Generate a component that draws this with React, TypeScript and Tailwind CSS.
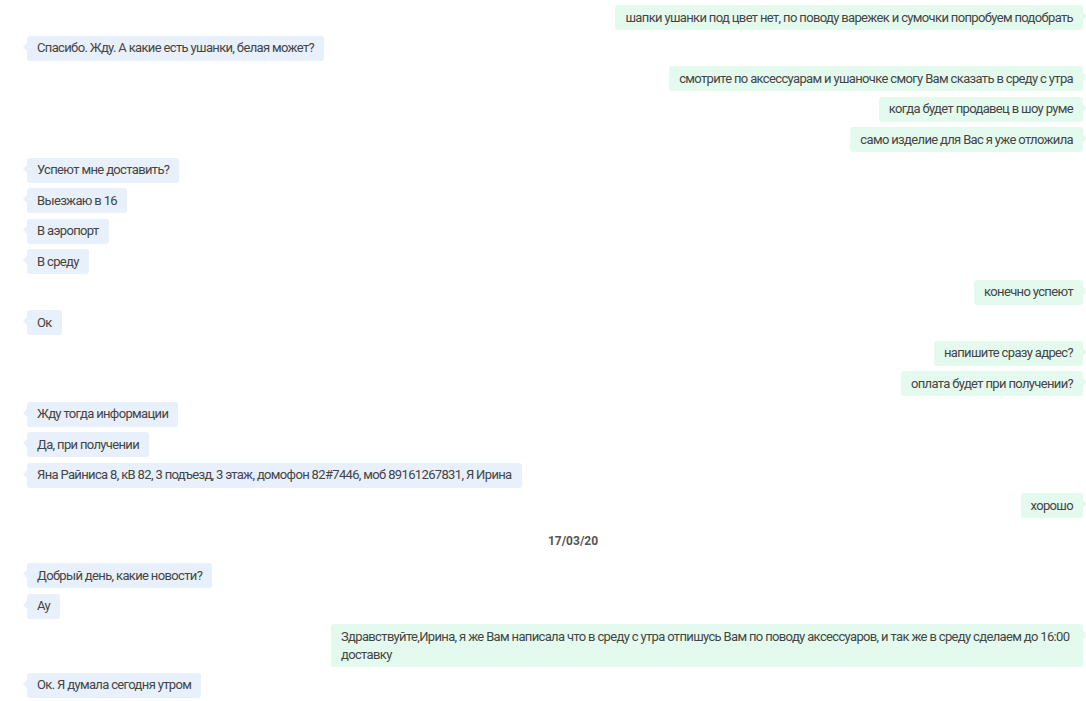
type Msg = { side: 'l' | 'r'; text: string } | { date: string }

const messages: Msg[] = [
  { side: 'r', text: 'шапки ушанки под цвет нет, по поводу варежек и сумочки попробуем подобрать' },
  { side: 'l', text: 'Спасибо. Жду. А какие есть ушанки, белая может?' },
  { side: 'r', text: 'смотрите по аксессуарам и ушаночке смогу Вам сказать в среду с утра' },
  { side: 'r', text: 'когда будет продавец в шоу руме' },
  { side: 'r', text: 'само изделие для Вас я уже отложила' },
  { side: 'l', text: 'Успеют мне доставить?' },
  { side: 'l', text: 'Выезжаю в 16' },
  { side: 'l', text: 'В аэропорт' },
  { side: 'l', text: 'В среду' },
  { side: 'r', text: 'конечно успеют' },
  { side: 'l', text: 'Ок' },
  { side: 'r', text: 'напишите сразу адрес?' },
  { side: 'r', text: 'оплата будет при получении?' },
  { side: 'l', text: 'Жду тогда информации' },
  { side: 'l', text: 'Да, при получении' },
  { side: 'l', text: 'Яна Райниса 8, кВ 82, 3 подъезд, 3 этаж, домофон 82#7446, моб 89161267831, Я Ирина' },
  { side: 'r', text: 'хорошо' },
  { date: '17/03/20' },
  { side: 'l', text: 'Добрый день, какие новости?' },
  { side: 'l', text: 'Ау' },
  {
    side: 'r',
    text: 'Здравствуйте,Ирина, я же Вам написала что в среду с утра отпишусь Вам по поводу аксессуаров, и так же в среду сделаем до 16:00 доставку',
  },
  { side: 'l', text: 'Ок. Я думала сегодня утром' },
]

function Bubble({ side, text }: { side: 'l' | 'r'; text: string }) {
  const left = side === 'l'
  return (
    <div className={left ? 'flex justify-start pl-[27px]' : 'flex justify-end pr-[3px]'}>
      <div
        className={
          left
            ? 'relative max-w-[752px] rounded-[3px] bg-[#e8f0fb] px-[10px] py-[3.5px] leading-[18px] text-[#444]'
            : 'relative max-w-[752px] rounded-[3px] bg-[#e5faef] px-[10px] py-[3.5px] leading-[18px] text-[#444]'
        }
      >
        {left ? (
          <span className="absolute left-[-4px] top-[7px] h-0 w-0 border-y-[4px] border-r-[4px] border-y-transparent border-r-[#e8f0fb]" />
        ) : (
          <span className="absolute right-[-4px] top-[7px] h-0 w-0 border-y-[4px] border-l-[4px] border-y-transparent border-l-[#e5faef]" />
        )}
        {text}
      </div>
    </div>
  )
}

export default function App() {
  return (
    <div className="h-[701px] w-[1086px] overflow-hidden bg-white pt-[5px] font-['Roboto',sans-serif] text-[13px] tracking-[-0.65px]">
      <div className="flex flex-col gap-[5.5px]">
        {messages.map((m, i) =>
          'date' in m ? (
            <div key={i} className="flex justify-center py-[8px] pl-[60px] text-[12px] font-bold leading-[18px] tracking-normal text-[#555]">
              {m.date}
            </div>
          ) : (
            <Bubble key={i} side={m.side} text={m.text} />
          ),
        )}
      </div>
    </div>
  )
}
